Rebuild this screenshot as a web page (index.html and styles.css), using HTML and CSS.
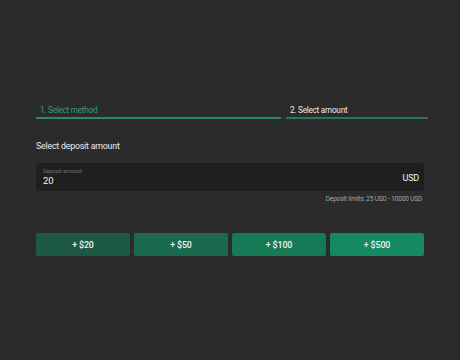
FILE: index.html
```html
<!DOCTYPE html>
<html>
<head>
<meta charset="utf-8">
<link rel="stylesheet" href="styles.css">
</head>
<body>
<div class="wrap">
  <div class="tabs">
    <div class="tab tab-active">1. Select method</div>
    <div class="tab tab-current">2. Select amount</div>
  </div>
  <div class="heading">Select deposit amount</div>
  <div class="field">
    <div class="field-main">
      <div class="field-label">Deposit amount</div>
      <div class="field-value">20</div>
    </div>
    <div class="field-cur">USD</div>
  </div>
  <div class="limits">Deposit limits: 25 USD - 10000 USD</div>
  <div class="quick">
    <button class="qbtn q1">+ $20</button>
    <button class="qbtn q2">+ $50</button>
    <button class="qbtn q3">+ $100</button>
    <button class="qbtn q4">+ $500</button>
  </div>
</div>
</body>
</html>
```

FILE: styles.css
```css
html, body {
  margin: 0;
  padding: 0;
  background: #2b2b2b;
  font-family: Roboto, "Liberation Sans", sans-serif;
  color: #e6e6e6;
}
.wrap {
  width: 388px;
  padding: 104px 0 0 36px;
}
.tabs {
  display: flex;
  gap: 5px;
  width: 392px;
}
.tab {
  font-size: 8.2px;
  line-height: 12px;
  padding: 0 0 1px 4px;
  border-bottom: 2px solid #237a58;
  letter-spacing: -0.25px;
}
.tab-active {
  width: 241px;
  color: #3c9c74;
  border-bottom-color: #2a8a62;
}
.tab-current {
  width: 138px;
  color: #e8e8e8;
  border-bottom-color: #23795a;
}
.heading {
  margin-top: 21px;
  font-size: 8.8px;
  line-height: 12px;
  letter-spacing: -0.2px;
  color: #ececec;
}
.field {
  margin-top: 11px;
  height: 28px;
  background: #1f1f1f;
  border-radius: 2px;
  display: flex;
  align-items: center;
  justify-content: space-between;
  padding: 0 5px 0 7px;
}
.field-main {
  display: flex;
  flex-direction: column;
}
.field-label {
  font-size: 5.5px;
  line-height: 7px;
  color: #6f6f6f;
  margin-top: 1px;
}
.field-value {
  font-size: 9.5px;
  line-height: 12px;
  color: #f2f2f2;
}
.field-cur {
  font-size: 9px;
  letter-spacing: -0.2px;
  color: #f2f2f2;
  margin-top: 1px;
}
.limits {
  text-align: right;
  font-size: 6.4px;
  line-height: 9px;
  letter-spacing: -0.1px;
  color: #a8a8a8;
  margin-top: 4px;
  padding-right: 2px;
}
.quick {
  margin-top: 29px;
  display: grid;
  grid-template-columns: repeat(4, 1fr);
  gap: 4px;
}
.qbtn {
  height: 23px;
  border: none;
  border-radius: 2px;
  color: #f4f4f4;
  font-family: Roboto, "Liberation Sans", sans-serif;
  font-size: 8.8px;
  font-weight: 500;
  letter-spacing: -0.1px;
  padding: 0;
}
.q1 { background: #1e5a43; }
.q2 { background: #1b6a4d; }
.q3 { background: #177a57; }
.q4 { background: #158a62; }
```
